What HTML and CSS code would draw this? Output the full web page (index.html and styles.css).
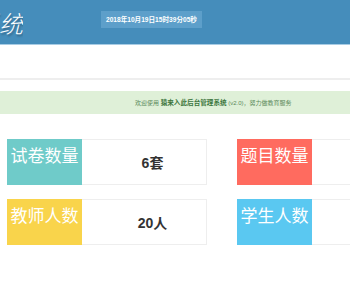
FILE: index.html
```html
<!DOCTYPE html>
<html lang="zh-CN">
<head>
    <meta charset="UTF-8">
    <meta name="viewport" content="width=device-width, initial-scale=1.0">
    <title>猿来入此后台管理系统</title>
    <link rel="stylesheet" href="styles.css">
</head>
<body>
    <header class="topbar">
        <div class="brand"><span>猿来入此后台管理系统</span></div>
        <div class="clock">2018年10月19日15时39分05秒</div>
    </header>

    <div class="crumbs"></div>

    <div class="welcome">
        欢迎使用 <b>猿来入此后台管理系统</b> (v2.0)，努力做教育服务
    </div>

    <div class="stats">
        <div class="card">
            <div class="label teal">试卷数量</div>
            <div class="value">6套</div>
        </div>
        <div class="card">
            <div class="label red">题目数量</div>
            <div class="value">120道</div>
        </div>
        <div class="card">
            <div class="label yellow">教师人数</div>
            <div class="value">20人</div>
        </div>
        <div class="card">
            <div class="label blue">学生人数</div>
            <div class="value">300人</div>
        </div>
    </div>
</body>
</html>
```

FILE: styles.css
```css
body {
    margin: 0;
    font-family: "Liberation Sans", "Noto Sans CJK SC", sans-serif;
    background: #fff;
    color: #333;
    overflow: hidden;
}
.topbar {
    height: 44px;
    background: #458dbb;
    border-bottom: 1px solid #a8cce4;
    display: flex;
    align-items: flex-start;
}
.brand {
    width: 23px;
    height: 44px;
    overflow: hidden;
    display: flex;
    justify-content: flex-end;
    align-items: center;
    white-space: nowrap;
}
.brand span {
    color: #fff;
    font-family: "Noto Sans CJK SC", serif;
    font-weight: 300;
    font-style: italic;
    font-size: 24px;
    margin-right: 0;
    text-shadow: 1px 2px 2px rgba(0, 0, 0, 0.3);
}
.clock {
    margin: 11px 0 0 78px;
    height: 17px;
    line-height: 17px;
    padding: 0 5px;
    background: #5d9fca;
    color: #fff;
    font-size: 6.6px;
    font-weight: bold;
}
.crumbs {
    height: 33px;
    border-bottom: 2px solid #eee;
}
.welcome {
    margin-top: 11px;
    height: 23px;
    line-height: 23px;
    background: #dff0d8;
    color: #5a8a5a;
    font-size: 6px;
    padding-left: 135px;
    white-space: nowrap;
}
.welcome b {
    color: #3c763d;
    font-size: 6.6px;
}
.stats {
    display: grid;
    grid-template-columns: 200px 200px;
    gap: 14px 30px;
    padding: 25px 7px;
}
.card {
    display: flex;
    height: 46px;
    border: 1px solid #eee;
    box-sizing: border-box;
    background: #fff;
}
.label {
    width: 75px;
    margin: -1px 0 -1px -1px;
    color: #fff;
    font-size: 17px;
    text-align: center;
    line-height: 36px;
}
.value {
    flex: 1;
    text-align: center;
    padding-left: 17px;
    line-height: 46px;
    font-size: 14px;
    font-weight: bold;
}
.teal { background-color: #6fcbc9; }
.red { background-color: #ff6b5f; }
.yellow { background-color: #f9d44b; }
.blue { background-color: #5ac8f1; }
```
